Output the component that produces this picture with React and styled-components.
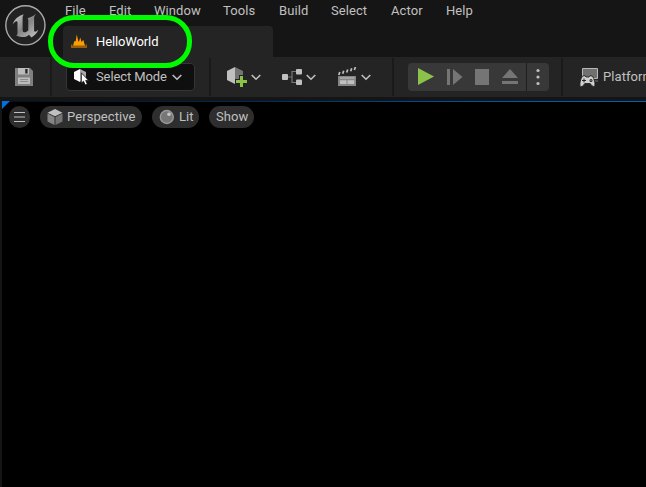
import React from "react";
import styled, { createGlobalStyle } from "styled-components";

const Global = createGlobalStyle`
  * { box-sizing: border-box; }
  body { margin: 0; background: #000; overflow: hidden; }
  svg { display: block; flex: none; }
`;

const Editor = styled.div`
  position: relative;
  width: 646px;
  height: 487px;
  overflow: hidden;
  display: flex;
  flex-direction: column;
  background: #151515;
  color: #c0c0c0;
  font-family: Roboto, "Liberation Sans", sans-serif;
  font-size: 13px;
  line-height: 16px;
  letter-spacing: 0.08px;
  white-space: nowrap;
`;

const Header = styled.header`
  display: flex;
  height: 57px;
  flex: none;
`;

const LogoSlot = styled.div`
  width: 63px;
  padding: 4px 0 0 4px;
`;

const HeaderMain = styled.div`
  display: flex;
  flex-direction: column;
`;

const MenuBar = styled.nav`
  display: flex;
  height: 26px;
  padding: 3px 0 0 2px;
`;

const MenuItem = styled.span`
  width: ${(p) => p.$width}px;
  flex: none;
`;

const Tab = styled.div`
  display: flex;
  align-items: center;
  width: 210px;
  height: 31px;
  padding-left: 8px;
  gap: 9px;
  border-radius: 4px 4px 0 0;
  background: #242424;
  color: #fff;
  letter-spacing: -0.12px;
`;

const Toolbar = styled.div`
  display: flex;
  align-items: center;
  flex: none;
  width: 700px;
  height: 40px;
  background: #242424;
`;

const Section = styled.div`
  display: flex;
  align-items: center;
  flex: none;
  height: 38px;
  width: ${(p) => p.$width}px;
  padding-left: ${(p) => p.$inset}px;
  border-right: ${(p) => (p.$last ? 0 : 2)}px solid #1a1a1a;
`;

const ModeSelect = styled.button`
  display: flex;
  align-items: center;
  width: 129px;
  height: 28px;
  padding: 0 0 0 6px;
  border: 1px solid #353535;
  border-radius: 4px;
  background: #0f0f0f;
  color: #c0c0c0;
  font: inherit;
  letter-spacing: -0.1px;
  text-align: left;
`;

const ModeLabel = styled.span`
  width: 76px;
  margin-left: 6px;
`;

const IconButton = styled.div`
  display: flex;
  align-items: center;
  justify-content: space-between;
  width: ${(p) => p.$width}px;
  height: 28px;
  margin-right: ${(p) => p.$after || 0}px;
  flex: none;
`;

const PlayGroup = styled.div`
  display: flex;
  align-items: center;
  width: 141px;
  height: 28px;
  border-radius: 4px;
  background: #383838;
`;

const PlayButtons = styled.div`
  display: flex;
  width: 119px;
  height: 28px;
  border-right: 1px solid #1f1f1f;
`;

const More = styled.div`
  display: flex;
  justify-content: center;
  width: 22px;
`;

const PlatformLabel = styled.span`
  margin-left: 3px;
`;

const Viewport = styled.main`
  position: relative;
  flex: 1;
  margin: 4px 0 0 2px;
  background: #000;
`;

const FocusLine = styled.div`
  height: 1px;
  background: linear-gradient(90deg, #001020, #002850 35%, #0054a8 75%, #0060c0);
`;

const FocusCorner = styled.div`
  position: absolute;
  top: 0;
  left: 0;
  width: 8px;
  height: 8px;
  background: #0070e0;
  clip-path: polygon(0 0, 100% 0, 0 100%);
`;

const ViewportBar = styled.div`
  display: flex;
  gap: 10px;
  padding: 4px 0 0 7px;
`;

const Pill = styled.div`
  display: flex;
  align-items: center;
  width: ${(p) => p.$width}px;
  height: 22px;
  padding-left: ${(p) => p.$inset}px;
  gap: ${(p) => p.$gap || 5}px;
  border-radius: 11px;
  background: #2e2e2e;
`;

const Highlight = styled.div`
  position: absolute;
  left: 48px;
  top: 15px;
  width: 144px;
  height: 53px;
  border: 5px solid #00fb00;
  border-radius: 26px;
`;

const Logo = () => (
  <svg width="43" height="43" viewBox="0 0 43 43">
    <defs>
      <linearGradient id="metal" x1="0" y1="0" x2="1" y2="1">
        <stop offset="0" stopColor="#d0d0d0" />
        <stop offset=".5" stopColor="#858585" />
        <stop offset="1" stopColor="#c8c8c8" />
      </linearGradient>
    </defs>
    <circle cx="21.4" cy="21.3" r="19.6" fill="#222" stroke="#aaa" strokeWidth="1.4" />
    <path
      fill="url(#metal)"
      d="M8.6 20.7C10.3 15.4 14 11.8 20 10.2C18.9 11.4 18.6 12.3 18.6 14V26.2C18.6 28 20.2 28.9 22.5 27.7C23.5 27.2 24.3 26.5 24.3 26.3V16C24.3 14.7 23.6 14.3 22.4 14.8C25.8 13.1 29.5 12.6 32 9.7C31.3 11.4 30.1 12.1 30.1 13.8V26.2C30.1 28.2 31.6 28.2 34.4 25.8C33 29.4 30.3 31.5 27.5 33.5L24.9 30.7C23.5 32 21.7 33.1 18.7 33.1C15.2 33 12 31.2 12 31.2C13.3 31.1 13.5 30.3 13.5 28.6V18.7C13.5 16.1 10.6 17.4 8.6 20.7Z"
    />
  </svg>
);

const LevelIcon = () => (
  <svg width="16" height="15" viewBox="0 0 16 15">
    <path fill="#ff9c00" d="M2 11.8L3.2 7.5L4 7L4.6 7.6L5.8 .6L7.3 7.2L8 7.6L9.3 3.6L10.5 8L12.3 5.8L14 11.8Z" />
    <path fill="#96600a" d="M0 10.5H1.5V12H14.5V10.5H16V14H0Z" />
  </svg>
);

const SaveIcon = () => (
  <svg width="18" height="18" viewBox="0 0 18 18">
    <path fill="#808080" d="M0 0H15L18 3V18H0Z" />
    <path fill="#bcbcbc" d="M3 0H14V6.5H3ZM3 9.5H15V16H3Z" />
    <path fill="#282828" d="M10.2 1H12.6V5.5H10.2Z" />
    <path stroke="#8d8d8d" d="M5 11.5H13M5 13.5H13" />
  </svg>
);

const Chevron = () => (
  <svg width="10" height="7" viewBox="0 0 10 7">
    <path fill="none" stroke="#c0c0c0" strokeWidth="1.6" d="M.7 1L5 5.2L9.3 1" />
  </svg>
);

const ModeIcon = () => (
  <svg width="17" height="18" viewBox="0 0 17 18">
    <path fill="#fff" d="M1 4L7 1V14L1 11Z" />
    <path fill="#aaa" d="M7 1L13 4V10L8 6V13L7 14Z" />
    <path fill="#fff" stroke="#0f0f0f" strokeWidth=".8" d="M8.3 4.8V15.2L10.5 13.2L12.2 17L14.3 16L12.7 12.4H15.6Z" />
  </svg>
);

const AddIcon = () => (
  <svg width="22" height="22" viewBox="0 0 22 22">
    <path fill="#c0c0c0" d="M1 5L9 1V18L1 14Z" />
    <path fill="#747474" d="M9 1L17 5V9.5H13V13H9Z" />
    <path stroke="#242424" strokeWidth="5" d="M15.5 9V22M9 15.5H22" />
    <path stroke="#8bc34a" strokeWidth="3" d="M15.5 10V21M10 15.5H21" />
  </svg>
);

const BlueprintIcon = () => (
  <svg width="21" height="18" viewBox="0 0 21 18">
    <path fill="none" stroke="#777" strokeWidth="1.2" d="M5 9H10M15 3.5H10V14.5H15" />
    <rect x="0" y="6" width="6" height="6" rx="1" fill="#c0c0c0" />
    <rect x="14" y="1" width="6" height="5.5" rx="1" fill="#c0c0c0" />
    <rect x="14" y="11.5" width="6" height="5.5" rx="1" fill="#c0c0c0" />
  </svg>
);

const ClapperIcon = () => (
  <svg width="19" height="20" viewBox="0 0 19 20">
    <path
      stroke="#c0c0c0"
      strokeWidth="1.7"
      d="M.8 8L1.8 5M4.7 6.8L5.7 3.8M8.7 5.5L9.7 2.5M12.7 4.2L13.7 1.2M16.4 3L17.4 0"
    />
    <path fill="#858585" d="M0 9H18V19H0Z" />
    <path fill="#c0c0c0" d="M2 10.5H16.5V11.5H2ZM2 13.2H8.5V17H2ZM9.5 13.2H16.2V17H9.5Z" />
  </svg>
);

const TransportIcons = () => (
  <svg width="118" height="28" viewBox="0 0 118 28">
    <path fill="#8bc34a" d="M10 5V22L26 13.5Z" />
    <path fill="#757575" d="M39 6H42V22H39ZM45 6V22L54.5 14ZM67 6H81V22H67ZM94 15L102 6L110 15ZM94 18H110V21H94Z" />
  </svg>
);

const DotsIcon = () => (
  <svg width="4" height="18" viewBox="0 0 4 18" fill="#c0c0c0">
    <circle cx="2" cy="2.5" r="1.6" />
    <circle cx="2" cy="9" r="1.6" />
    <circle cx="2" cy="15.5" r="1.6" />
  </svg>
);

const PlatformIcon = () => (
  <svg width="21" height="21" viewBox="0 0 21 21">
    <path fill="#707070" stroke="#b8b8b8" d="M3.5 1.5H18.5V11.5H3.5Z" />
    <path fill="#777" d="M14 13.5H19V14.5H16Z" />
    <path
      fill="#d0d0d0"
      stroke="#242424"
      strokeWidth=".9"
      d="M3.5 9L6 8.7L7 10H10L11 8.7L13.5 9.2C15.2 12 16.5 16 15.8 18.7C14.5 20.5 12.8 18.8 11.2 16.5H5.8C4.2 18.8 2.2 20.7 1 18.7C.5 16 1.6 12 3.5 9Z"
    />
    <path stroke="#242424" d="M3 13.5H7M5 11.5V15.5" />
    <circle cx="12" cy="13.5" r="1.5" fill="#242424" />
    <circle cx="12" cy="13.5" r=".5" fill="#d0d0d0" />
  </svg>
);

const BurgerIcon = () => (
  <svg width="11" height="12" viewBox="0 0 11 12">
    <path stroke="#c0c0c0" strokeWidth="1" d="M0 1.5H11M0 6H11M0 10.5H11" />
  </svg>
);

const CubeIcon = () => (
  <svg width="16" height="18" viewBox="0 0 16 18">
    <path fill="#c0c0c0" d="M8 1L15.5 4.7L8 8.2L.5 4.7Z" />
    <path fill="#858585" d="M.5 5.5L7.5 9V17L.5 13.5Z" />
    <path fill="#747474" d="M15.5 5.5L8.5 9V17L15.5 13.5Z" />
  </svg>
);

const SphereIcon = () => (
  <svg width="15" height="16" viewBox="0 0 15 16">
    <circle cx="7.8" cy="8" r="6.5" fill="#777" stroke="#999" strokeWidth="1.4" />
    <circle cx="10" cy="5.3" r="1.8" fill="#c8c8c8" />
  </svg>
);

const menus = [
  ["File", 44], ["Edit", 45], ["Window", 69], ["Tools", 56],
  ["Build", 52], ["Select", 60], ["Actor", 55], ["Help", 40],
];

export default function App() {
  return (
    <>
      <Global />
      <Editor>
        <Header>
          <LogoSlot><Logo /></LogoSlot>
          <HeaderMain>
            <MenuBar>
              {menus.map(([label, width]) => (
                <MenuItem key={label} $width={width}>{label}</MenuItem>
              ))}
            </MenuBar>
            <Tab><LevelIcon />HelloWorld</Tab>
          </HeaderMain>
        </Header>
        <Toolbar>
          <Section $width={52} $inset={15}><SaveIcon /></Section>
          <Section $width={159} $inset={14}>
            <ModeSelect><ModeIcon /><ModeLabel>Select Mode</ModeLabel><Chevron /></ModeSelect>
          </Section>
          <Section $width={183} $inset={15}>
            <IconButton $width={35} $after={21}><AddIcon /><Chevron /></IconButton>
            <IconButton $width={34} $after={22}><BlueprintIcon /><Chevron /></IconButton>
            <IconButton $width={33}><ClapperIcon /><Chevron /></IconButton>
          </Section>
          <Section $width={169} $inset={14}>
            <PlayGroup>
              <PlayButtons><TransportIcons /></PlayButtons>
              <More><DotsIcon /></More>
            </PlayGroup>
          </Section>
          <Section $width={137} $inset={16} $last>
            <PlatformIcon /><PlatformLabel>Platforms</PlatformLabel>
          </Section>
        </Toolbar>
        <Viewport>
          <FocusLine />
          <FocusCorner />
          <ViewportBar>
            <Pill $width={21} $inset={5}><BurgerIcon /></Pill>
            <Pill $width={102} $inset={7} $gap={4}><CubeIcon />Perspective</Pill>
            <Pill $width={47} $inset={7}><SphereIcon />Lit</Pill>
            <Pill $width={45} $inset={7}>Show</Pill>
          </ViewportBar>
        </Viewport>
        <Highlight />
      </Editor>
    </>
  );
}
